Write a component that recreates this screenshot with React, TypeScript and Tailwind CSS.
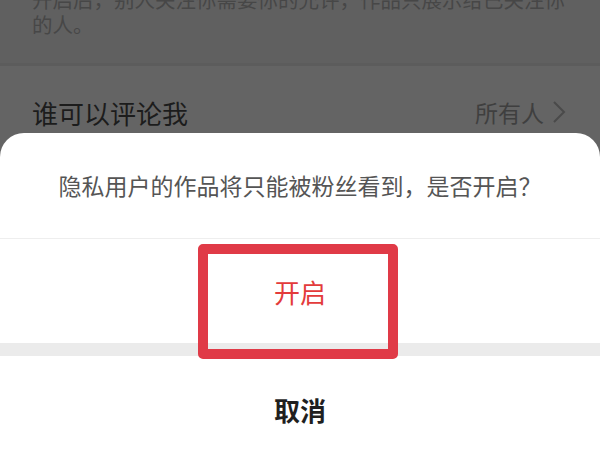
export default function App() {
  return (
    <div
      className="relative w-[600px] h-[450px] overflow-hidden bg-[#646464]"
      style={{ fontFamily: '"Noto Sans CJK SC", "Noto Sans", sans-serif' }}
    >
      {/* Dimmed settings page behind the sheet */}
      <div className="h-[66px] bg-[#606060] pl-[32px] overflow-hidden border-b-[3px] border-[#5c5c5c]">
        <p className="-mt-[13px] text-[20.5px] leading-[25px] text-[#474747] whitespace-nowrap">
          开启后，别人关注你需要你的允许，作品只展示给已关注你
          <br />
          的人。
        </p>
      </div>
      <div className="h-[92px] flex items-center justify-between pl-[32px] pr-[34px]">
        <span className="text-[26px] text-[#1c1c1c]">谁可以评论我</span>
        <div className="flex items-center gap-[8px]">
          <span className="text-[23px] text-[#3f3f3f]">所有人</span>
          <svg width="14" height="24" viewBox="0 0 14 24" fill="none">
            <polyline points="2,2 12,12 2,22" stroke="#4a4a4a" strokeWidth="2" />
          </svg>
        </div>
      </div>

      {/* Action sheet */}
      <div className="absolute left-0 right-0 top-[133px] h-[330px] bg-white rounded-t-[24px] flex flex-col">
        <div className="h-[107px] flex items-center justify-center border-b border-[#eeeeee]">
          <span className="text-[23px] text-[#555555]">隐私用户的作品将只能被粉丝看到，是否开启？</span>
        </div>
        <div className="h-[106px] flex items-center justify-center">
          <span className="text-[26px] text-[#e33b3b]">开启</span>
        </div>
        <div className="h-[13px] bg-[#ebebeb]" />
        <div className="h-[108px] flex items-center justify-center">
          <span className="text-[26px] font-bold text-[#1f1f1f]">取消</span>
        </div>
      </div>

      {/* Highlight annotation */}
      <div className="absolute left-[198px] top-[244px] w-[200px] h-[115px] border-[10px] border-[#e03a47] rounded-[5px]" />
    </div>
  )
}
